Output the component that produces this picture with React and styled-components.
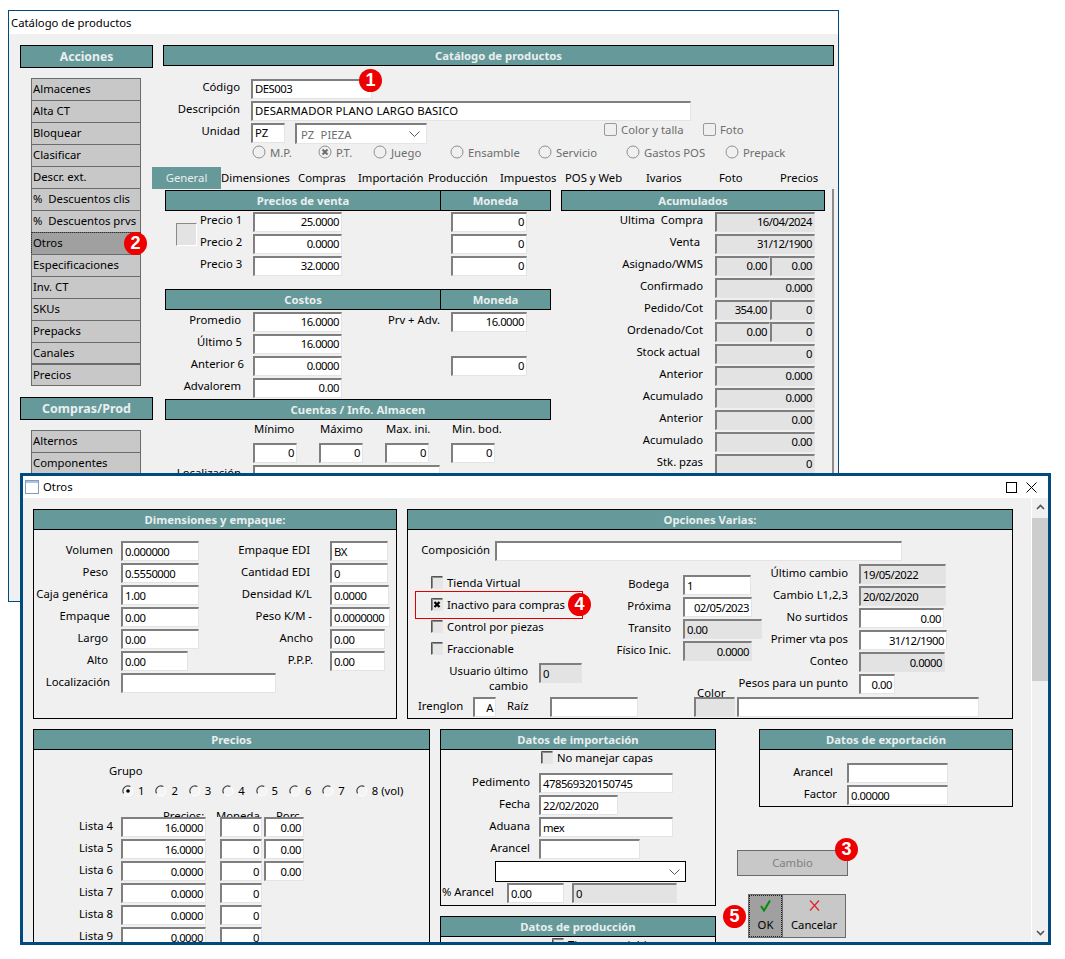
import React from 'react';
import styled, { createGlobalStyle } from 'styled-components';

const GlobalStyle = createGlobalStyle`
  html, body {
    margin: 0;
    padding: 0;
    background: #fff;
  }
  body {
    font-family: "Noto Sans", "Liberation Sans", sans-serif;
    font-size: 11.3px;
    line-height: 16px;
    color: #000;
  }
`;

const TEAL = '#669999';
const FACE = '#f0f0f0';
const NAVY = '#004a80';

const Desktop = styled.div`
  position: relative;
  width: 1065px;
  height: 959px;
  overflow: hidden;
`;

/* windows sit on a free canvas, so these two keep their coordinates */
const Win = styled.section`
  --field-lh: ${(p) => (p.$compact ? 15 : 17)}px;
  --label-lh: ${(p) => (p.$compact ? 15 : 17)}px;
  position: absolute;
  box-sizing: border-box;
  left: ${(p) => p.$left}px;
  top: ${(p) => p.$top}px;
  width: ${(p) => p.$w}px;
  height: ${(p) => p.$h}px;
  border: ${(p) => p.$frame}px solid ${NAVY};
  background: ${FACE};
  display: flex;
  flex-direction: column;
  overflow: hidden;
`;

const TitleBar = styled.header`
  flex: none;
  height: ${(p) => p.$h}px;
  background: #fff;
  display: flex;
  align-items: center;
  padding: 0 11px 0 2px;
  gap: 4px;
`;

const TitleSpacer = styled.div`
  flex: 1;
`;

const TitleIcon = styled.svg`
  display: block;
  flex: none;
  margin-left: ${(p) => p.$ml || 0}px;
`;

const BackBody = styled.div`
  flex: 1;
  display: flex;
  padding: 11px 0 0 11px;
  min-height: 0;
`;

const Sidebar = styled.aside`
  flex: none;
  width: 133px;
  margin-right: 10px;
`;

const Band = styled.div`
  box-sizing: border-box;
  flex: ${(p) => (p.$w ? 'none' : 1)};
  width: ${(p) => (p.$w ? `${p.$w}px` : 'auto')};
  height: ${(p) => p.$h || 21}px;
  margin-left: ${(p) => p.$ml || 0}px;
  background: ${TEAL};
  border: 1px solid #000;
  color: #e9efef;
  font-weight: 700;
  font-size: ${(p) => p.$fs || 11.3}px;
  display: flex;
  align-items: center;
  justify-content: center;
  white-space: nowrap;
`;

const BandRow = styled.div`
  display: flex;
`;

const Menu = styled.nav`
  width: 110px;
  margin: ${(p) => p.$mt}px 0 ${(p) => p.$mb || 0}px 11px;
`;

const MenuItem = styled.div`
  position: relative;
  box-sizing: border-box;
  height: ${(p) => p.$h || 23}px;
  margin-top: ${(p) => (p.$first ? 0 : -1)}px;
  margin-bottom: ${(p) => (p.$gap ? 1 : 0)}px;
  padding-left: 1px;
  background: ${(p) => (p.$active ? '#a0a0a0' : '#c8c8c8')};
  border: 1px solid #6b6b6b;
  line-height: 20px;
  white-space: pre;
  outline: ${(p) => (p.$active ? '1px dotted #333' : 'none')};
  outline-offset: -1px;
`;

const Main = styled.main`
  flex: none;
  width: 671px;
`;

const Row = styled.div`
  position: relative;
  display: flex;
  align-items: flex-start;
  height: ${(p) => p.$h || 22}px;
  margin-left: ${(p) => p.$ml || 0}px;
  margin-top: ${(p) => p.$mt || 0}px;
`;

const Label = styled.span`
  flex: none;
  box-sizing: border-box;
  display: flex;
  justify-content: ${(p) => (p.$left ? 'flex-start' : 'flex-end')};
  width: ${(p) => p.$w}px;
  padding-right: ${(p) => (p.$pr === undefined ? 11 : p.$pr)}px;
  padding-left: ${(p) => p.$pl || 0}px;
  white-space: pre;
  line-height: var(--label-lh);
`;

const WrapLabel = styled(Label)`
  display: block;
  text-align: right;
  line-height: 15px;
`;

const Field = styled.div`
  flex: none;
  box-sizing: border-box;
  width: ${(p) => p.$w}px;
  height: ${(p) => p.$h || 20}px;
  margin-left: ${(p) => p.$ml || 0}px;
  padding: 0 ${(p) => (p.$right ? 2 : 3)}px 0 ${(p) => (p.$right ? 0 : 2)}px;
  border-style: solid;
  border-width: 2px 1px 1px 2px;
  border-color: #7f7f7f #e4e4e4 #e4e4e4 #7f7f7f;
  background: ${(p) => (p.$off ? '#e3e3e3' : '#fff')};
  text-align: ${(p) => (p.$right ? 'right' : 'left')};
  line-height: var(--field-lh);
  letter-spacing: ${(p) => (p.$plain ? 0.1 : -0.5)}px;
  white-space: pre;
`;

const SelectBox = styled(Field)`
  display: flex;
  align-items: center;
  justify-content: space-between;
  color: #6d6d6d;
  padding-left: 4px;
  padding-right: 6px;
`;

const DropBox = styled.div`
  box-sizing: border-box;
  width: 191px;
  height: 21px;
  margin-left: 54px;
  border: 1px solid #000;
  background: #fff;
  display: flex;
  align-items: center;
  justify-content: flex-end;
  padding-right: 5px;
`;

const Chevron = styled.svg`
  display: block;
`;

const ModernCheck = styled.span`
  flex: none;
  box-sizing: border-box;
  width: 13px;
  height: 13px;
  border: 1px solid #9a9a9a;
  border-radius: 2px;
  margin: 0 4px 0 ${(p) => p.$ml || 0}px;
`;

const MutedText = styled.span`
  flex: none;
  width: ${(p) => p.$w}px;
  color: #6d6d6d;
  white-space: nowrap;
  line-height: 14px;
`;

const RadioRow = styled.div`
  display: flex;
  height: 22px;
  margin-left: 89px;
`;

const RadioOption = styled.div`
  flex: none;
  width: ${(p) => p.$w}px;
  display: flex;
  gap: 4px;
  color: #6d6d6d;
`;

const RadioIcon = styled.svg`
  display: block;
  flex: none;
  margin-top: ${(p) => p.$mt || 0}px;
`;

const TabBar = styled.div`
  display: flex;
  height: 22px;
  margin-left: -11px;
`;

const Tab = styled.div`
  flex: none;
  width: ${(p) => p.$w}px;
  line-height: 22px;
  white-space: nowrap;
  text-align: ${(p) => (p.$active ? 'center' : 'left')};
  background: ${(p) => (p.$active ? TEAL : 'transparent')};
  color: ${(p) => (p.$active ? '#e9efef' : '#000')};
`;

const TabPage = styled.div`
  box-sizing: border-box;
  display: flex;
  gap: 10px;
  width: 671px;
  height: 290px;
  padding: 1px 0 0 2px;
  border-right: 2px solid #8c8c8c;
`;

const PageCol = styled.div`
  flex: none;
  width: ${(p) => p.$w}px;
`;

const PriceBlock = styled.div`
  display: flex;
  height: 78px;
  padding-top: 1px;
  box-sizing: border-box;
`;

const Swatch = styled.div`
  flex: none;
  box-sizing: border-box;
  width: 21px;
  height: 23px;
  margin: 11px 3px 0 11px;
  background: #e3e3e3;
  border-style: solid;
  border-width: 1px;
  border-color: #8a8a8a #fff #fff #8a8a8a;
`;

const MinRow = styled.div`
  display: flex;
  height: 23px;
  padding: 1px 0 0 89px;
  box-sizing: border-box;
`;

const MinLabel = styled.span`
  flex: none;
  width: 66px;
`;

const Badge = styled.span`
  position: absolute;
  z-index: 5;
  left: ${(p) => p.$x}px;
  top: ${(p) => p.$y}px;
  width: 23px;
  height: 23px;
  border-radius: 50%;
  background: #ee0000;
  color: #fff;
  font-family: "Liberation Sans", sans-serif;
  font-weight: 700;
  font-size: 18px;
  line-height: 23px;
  text-align: center;
  letter-spacing: 0;
`;

const RedFrame = styled.span`
  position: absolute;
  left: -16px;
  top: -6px;
  width: 166px;
  height: 26px;
  border: 1px solid #e00000;
  pointer-events: none;
`;

const OtrosBody = styled.div`
  flex: 1;
  display: flex;
  min-height: 0;
`;

const OtrosContent = styled.div`
  flex: 1;
  padding: 11px 0 0 10px;
  min-width: 0;
`;

const Scrollbar = styled.div`
  flex: none;
  width: 16px;
  display: flex;
  flex-direction: column;
  align-items: center;
  background: ${FACE};
  border-left: 1px solid #fff;
`;

const ScrollBtn = styled.svg`
  flex: none;
  display: block;
  margin: ${(p) => p.$m};
`;

const ScrollThumb = styled.div`
  flex: none;
  width: 100%;
  height: 163px;
  background: #cdcdcd;
`;

const ScrollTrack = styled.div`
  flex: 1;
`;

const PanelRow = styled.div`
  display: flex;
  align-items: flex-start;
  gap: ${(p) => p.$gap || 0}px;
  margin-bottom: ${(p) => p.$mb || 0}px;
`;

const Panel = styled.div`
  flex: none;
  box-sizing: border-box;
  width: ${(p) => p.$w}px;
  height: ${(p) => p.$h}px;
  border: 1px solid #000;
  margin-bottom: ${(p) => p.$mb || 0}px;
  margin-left: ${(p) => p.$ml || 0}px;
`;

const PanelHead = styled.div`
  box-sizing: border-box;
  height: 20px;
  background: ${TEAL};
  border-bottom: 1px solid #000;
  color: #e9efef;
  font-weight: 700;
  text-align: center;
  line-height: 19px;
`;

const PanelBody = styled.div`
  padding-top: ${(p) => p.$pt || 0}px;
`;

const Columns = styled.div`
  display: flex;
  height: ${(p) => p.$h}px;
`;

const Col = styled.div`
  flex: none;
  width: ${(p) => p.$w}px;
  padding-top: ${(p) => p.$pt || 0}px;
  margin-left: ${(p) => p.$ml || 0}px;
`;

const CheckRow = styled.div`
  position: relative;
  display: flex;
  gap: 4px;
  height: ${(p) => p.$h || 22}px;
  margin-left: ${(p) => p.$ml || 0}px;
  white-space: nowrap;
`;

const CheckIcon = styled.svg`
  display: block;
  flex: none;
  margin-top: 1px;
`;

const ColorStack = styled.div`
  flex: none;
  width: 41px;
  margin: -12px 2px 0 56px;
`;

const ColorLabel = styled.div`
  height: 12px;
  overflow: hidden;
  padding-left: 3px;
  line-height: 15px;
`;

const GrupoLabel = styled.div`
  padding: 13px 0 0 75px;
  height: 20px;
`;

const GrupoRadios = styled.div`
  display: grid;
  grid-template-columns: repeat(8, 33.4px);
  height: 25px;
  margin-left: 88px;
  white-space: nowrap;
`;

const GrupoOption = styled.div`
  display: flex;
  gap: 4px;
  align-items: flex-start;
`;

const ColHeads = styled.div`
  display: flex;
  height: 9px;
  overflow: hidden;
  line-height: 15px;
`;

const ColHead = styled.span`
  flex: none;
  width: ${(p) => p.$w}px;
  white-space: nowrap;
`;

const SideStack = styled.div`
  flex: none;
  width: 300px;
  margin-left: 21px;
`;

const GreyButton = styled.div`
  box-sizing: border-box;
  position: relative;
  width: 111px;
  height: 26px;
  margin-top: 43px;
  background: #c8c8c8;
  border: 1px solid #6b6b6b;
  color: #7f7f7f;
  text-align: center;
  line-height: 23px;
`;

const Actions = styled.div`
  display: flex;
  margin: 18px 0 0 11px;
`;

const ActionBtn = styled.div`
  box-sizing: border-box;
  position: relative;
  flex: none;
  width: ${(p) => p.$w}px;
  height: 44px;
  margin-left: ${(p) => p.$ml || 0}px;
  background: ${(p) => (p.$active ? '#a0a0a0' : '#c8c8c8')};
  border: 1px solid #6b6b6b;
  outline: ${(p) => (p.$active ? '1px dotted #222' : 'none')};
  outline-offset: -2px;
  display: flex;
  flex-direction: column;
  align-items: center;
  padding-top: 4px;
  gap: 5px;
`;

const ActionIcon = styled.svg`
  display: block;
  flex: none;
`;

function Radio({ checked }) {
  return (
    <RadioIcon width="14" height="14" viewBox="0 0 14 14">
      <circle cx="7" cy="7" r="6" fill="none" stroke="#8f8f8f" />
      {checked && <path d="M4.5 4.5l5 5M9.5 4.5l-5 5" stroke="#6d6d6d" strokeWidth="2" />}
    </RadioIcon>
  );
}

function ClassicRadio({ checked }) {
  return (
    <RadioIcon $mt={2} width="12" height="12" viewBox="0 0 12 12">
      <circle cx="6" cy="6" r="5" fill="#f4f4f4" stroke="#fff" />
      <path d="M1.6 8.4A5 5 0 0 1 8.4 1.6" fill="none" stroke="#444" strokeWidth="1.2" />
      {checked && <circle cx="6" cy="6" r="1.8" fill="#000" />}
    </RadioIcon>
  );
}

function ClassicCheck({ checked }) {
  return (
    <CheckIcon width="12" height="13" viewBox="0 0 12 13">
      <rect x="0" y="0" width="12" height="13" fill="#e6e6e6" />
      <path d="M.5 12.5V.5h11" fill="none" stroke="#555" />
      <path d="M1.5 12V1.5h10" fill="none" stroke="#8a8a8a" />
      {checked && <path d="M3.5 4l5 5M8.5 4l-5 5" stroke="#000" strokeWidth="2.3" />}
    </CheckIcon>
  );
}

function ChevronDown() {
  return (
    <Chevron width="11" height="6" viewBox="0 0 11 6">
      <path d="M.5 .5l5 5 5-5" fill="none" stroke="#555" />
    </Chevron>
  );
}

const menuOne = [
  'Almacenes', 'Alta CT', 'Bloquear', 'Clasificar', 'Descr. ext.', '%  Descuentos clis',
  '%  Descuentos prvs', 'Otros', 'Especificaciones', 'Inv. CT', 'SKUs', 'Prepacks', 'Canales', 'Precios',
];

const topRadios = [
  ['M.P.', 66], ['P.T.', 55, true], ['Juego', 77], ['Ensamble', 88],
  ['Servicio', 88], ['Gastos POS', 99], ['Prepack', 70],
];

const tabs = [
  ['General', 69, true], ['Dimensiones', 77], ['Compras', 60], ['Importación', 70], ['Producción', 72],
  ['Impuestos', 65], ['POS y Web', 81], ['Ivarios', 73], ['Foto', 61], ['Precios', 50],
];

const acumulados = [
  ['Ultima  Compra', ['16/04/2024'], 12],
  ['Venta', ['31/12/1900'], 15],
  ['Asignado/WMS', ['0.00', '0.00'], 12],
  ['Confirmado', ['0.000'], 12],
  ['Pedido/Cot', ['354.00', '0'], 12],
  ['Ordenado/Cot', ['0.00', '0'], 12],
  ['Stock actual', ['0'], 15],
  ['Anterior', ['0.000'], 12],
  ['Acumulado', ['0.000'], 12],
  ['Anterior', ['0.00'], 12],
  ['Acumulado', ['0.00'], 12],
  ['Stk. pzas', ['0'], 12],
];

const dimsLeft = [
  ['Volumen', '0.000000', 78, 8],
  ['Peso', '0.5550000', 78, 13],
  ['Caja genérica', '1.00', 78, 13],
  ['Empaque', '0.00', 78, 11],
  ['Largo', '0.00', 78, 13],
  ['Alto', '0.00', 67, 13],
  ['Localización', '', 155, 11],
];

const dimsRight = [
  ['Empaque EDI', 'BX', 58, 20],
  ['Cantidad EDI', '0', 58, 20],
  ['Densidad K/L', '0.0000', 59, 18],
  ['Peso K/M -', '0.0000000', 60, 18],
  ['Ancho', '0.00', 55, 17],
  ['P.P.P.', '0.00', 55, 17],
];

const optChecks = [
  ['Tienda Virtual'],
  ['Inactivo para compras', true],
  ['Control por piezas'],
  ['Fraccionable'],
];

const optMiddle = [
  ['Bodega', '1', 68, false, false, 14],
  ['Próxima', '02/05/2023', 69, false, true, 12],
  ['Transito', '0.00', 79, true, false, 12],
  ['Físico Inic.', '0.0000', 69, true, true, 12],
];

const optRight = [
  ['Último cambio', '19/05/2022', 87, true, false],
  ['Cambio L1,2,3', '20/02/2020', 87, true, false],
  ['No surtidos', '0.00', 85, false, true],
  ['Primer vta pos', '31/12/1900', 88, false, true],
  ['Conteo', '0.0000', 86, true, true],
  ['Pesos para un punto', '0.00', 36, false, true],
];

const listas = [
  ['Lista 4', '16.0000', '0', '0.00'],
  ['Lista 5', '16.0000', '0', '0.00'],
  ['Lista 6', '0.0000', '0', '0.00'],
  ['Lista 7', '0.0000', '0'],
  ['Lista 8', '0.0000', '0'],
  ['Lista 9', '0.0000', '0'],
];

const importacion = [
  ['Pedimento', '478569320150745', 134],
  ['Fecha', '22/02/2020', 79],
  ['Aduana', 'mex', 134],
  ['Arancel', '', 101],
];

function menuHeight(name) {
  if (name === 'Canales' || name === 'Precios') return 22;
  return 23;
}

function CatalogWindow() {
  return (
    <Win $left={8} $top={10} $w={831} $h={592} $frame={1} $compact>
      <TitleBar $h={23}>Catálogo de productos</TitleBar>
      <BackBody>
        <Sidebar>
          <Band $h={23} $fs={12.2}>Acciones</Band>
          <Menu $mt={10} $mb={11}>
            {menuOne.map((name, i) => (
              <MenuItem
                key={name}
                $first={i === 0}
                $h={menuHeight(name)}
                $active={name === 'Otros'}
                $gap={name === 'Canales'}
              >
                {name}
                {name === 'Otros' && <Badge $x={92} $y={-1}>2</Badge>}
              </MenuItem>
            ))}
          </Menu>
          <Band $h={23} $fs={12.5}>Compras/Prod</Band>
          <Menu $mt={10}>
            <MenuItem $first>Alternos</MenuItem>
            <MenuItem>Componentes</MenuItem>
          </Menu>
        </Sidebar>

        <Main>
          <Band>Catálogo de productos</Band>
          <Row $mt={13}>
            <Label $w={88}>Código</Label>
            <Field $w={121}>DES003</Field>
            <Badge $x={196} $y={-10}>1</Badge>
          </Row>
          <Row>
            <Label $w={88}>Descripción</Label>
            <Field $w={440} $plain>DESARMADOR PLANO LARGO BASICO</Field>
          </Row>
          <Row>
            <Label $w={88}>Unidad</Label>
            <Field $w={34} $plain>PZ</Field>
            <SelectBox $w={132} $h={21} $ml={10} $plain>
              {'PZ  PIEZA'}
              <ChevronDown />
            </SelectBox>
            <ModernCheck $ml={177} />
            <MutedText $w={82}>Color y talla</MutedText>
            <ModernCheck />
            <MutedText $w={30}>Foto</MutedText>
          </Row>
          <RadioRow>
            {topRadios.map(([name, w, on]) => (
              <RadioOption key={name} $w={w}>
                <Radio checked={on} />
                {name}
              </RadioOption>
            ))}
          </RadioRow>
          <TabBar>
            {tabs.map(([name, w, on]) => (
              <Tab key={name} $w={w} $active={on}>{name}</Tab>
            ))}
          </TabBar>
          <TabPage>
            <PageCol $w={386}>
              <BandRow>
                <Band $w={276}>Precios de venta</Band>
                <Band $ml={-1}>Moneda</Band>
              </BandRow>
              <PriceBlock>
                <Swatch />
                <div>
                  {[['Precio 1', '25.0000'], ['Precio 2', '0.0000'], ['Precio 3', '32.0000']].map(([name, val]) => (
                    <Row key={name}>
                      <Label $w={53} $pr={0} $left>{name}</Label>
                      <Field $w={89} $right>{val}</Field>
                      <Field $w={76} $ml={109} $right>0</Field>
                    </Row>
                  ))}
                </div>
              </PriceBlock>
              <BandRow>
                <Band $w={276}>Costos</Band>
                <Band $ml={-1}>Moneda</Band>
              </BandRow>
              <Row $mt={2}>
                <Label $w={88} $pr={12}>Promedio</Label>
                <Field $w={89} $right>16.0000</Field>
                <Label $w={109} $pr={11}>Prv + Adv.</Label>
                <Field $w={76} $right>16.0000</Field>
              </Row>
              <Row>
                <Label $w={88} $pr={11}>Último 5</Label>
                <Field $w={89} $right>16.0000</Field>
              </Row>
              <Row>
                <Label $w={88} $pr={9}>Anterior 6</Label>
                <Field $w={89} $right>0.0000</Field>
                <Field $w={76} $ml={109} $right>0</Field>
              </Row>
              <Row $h={21}>
                <Label $w={88} $pr={12}>Advalorem</Label>
                <Field $w={89} $right>0.00</Field>
              </Row>
              <Band>Cuentas / Info. Almacen</Band>
              <MinRow>
                <MinLabel>Mínimo</MinLabel>
                <MinLabel>Máximo</MinLabel>
                <MinLabel>Max. ini.</MinLabel>
                <MinLabel>Min. bod.</MinLabel>
              </MinRow>
              <Row>
                <Label $w={88} $pr={0} />
                <Field $w={44} $right>0</Field>
                <Field $w={44} $ml={22} $right>0</Field>
                <Field $w={44} $ml={22} $right>0</Field>
                <Field $w={44} $ml={22} $right>0</Field>
              </Row>
              <Row>
                <Label $w={88} $pr={12}>Localización</Label>
                <Field $w={187} />
              </Row>
            </PageCol>
            <PageCol $w={264}>
              <Band>Acumulados</Band>
              {acumulados.map(([name, vals, pr], i) => (
                <Row key={`${name}${i}`} $mt={i === 0 ? 1 : 0}>
                  <Label $w={154} $pr={pr}>{name}</Label>
                  {vals.length === 1 ? (
                    <Field $w={100} $right $off>{vals[0]}</Field>
                  ) : (
                    <>
                      <Field $w={55} $right $off>{vals[0]}</Field>
                      <Field $w={45} $right $off>{vals[1]}</Field>
                    </>
                  )}
                </Row>
              ))}
            </PageCol>
          </TabPage>
        </Main>
      </BackBody>
    </Win>
  );
}

function OtrosWindow() {
  return (
    <Win $left={20} $top={473} $w={1031} $h={472} $frame={3}>
      <TitleBar $h={22}>
        <TitleIcon width="14" height="14" viewBox="0 0 14 14">
          <rect x=".5" y=".5" width="13" height="13" fill="#fff" stroke="#7f9db9" />
          <rect x="1" y="1" width="12" height="2" fill="#a9c3e6" />
        </TitleIcon>
        Otros
        <TitleSpacer />
        <TitleIcon width="11" height="11" viewBox="0 0 11 11">
          <rect x=".5" y=".5" width="10" height="10" fill="none" stroke="#000" />
        </TitleIcon>
        <TitleIcon $ml={5} width="11" height="11" viewBox="0 0 11 11">
          <path d="M.5 .5l10 10M10.5 .5l-10 10" stroke="#000" />
        </TitleIcon>
      </TitleBar>
      <OtrosBody>
        <OtrosContent>
          <PanelRow $gap={10} $mb={10}>
            <Panel $w={364} $h={210}>
              <PanelHead>Dimensiones y empaque:</PanelHead>
              <PanelBody $pt={11}>
                <Columns $h={170}>
                  <Col $w={196}>
                    {dimsLeft.map(([name, val, w, pr]) => (
                      <Row key={name}>
                        <Label $w={87} $pr={pr}>{name}</Label>
                        <Field $w={w}>{val}</Field>
                      </Row>
                    ))}
                  </Col>
                  <Col $w={160}>
                    {dimsRight.map(([name, val, w, pr]) => (
                      <Row key={name}>
                        <Label $w={100} $pr={pr}>{name}</Label>
                        <Field $w={w}>{val}</Field>
                      </Row>
                    ))}
                  </Col>
                </Columns>
              </PanelBody>
            </Panel>
            <Panel $w={606} $h={210}>
              <PanelHead>Opciones Varias:</PanelHead>
              <PanelBody $pt={11}>
                <Row>
                  <Label $w={87} $pr={5}>Composición</Label>
                  <Field $w={407} />
                </Row>
                <Columns $h={134}>
                  <Col $w={192} $pt={12}>
                    {optChecks.map(([name, on]) => (
                      <CheckRow key={name} $ml={23}>
                        <ClassicCheck checked={on} />
                        {name}
                        {on && (
                          <RedFrame>
                            <Badge $x={152} $y={1}>4</Badge>
                          </RedFrame>
                        )}
                      </CheckRow>
                    ))}
                    <Row>
                      <WrapLabel $w={131}>Usuario último<br />cambio</WrapLabel>
                      <Field $w={43} $off>0</Field>
                    </Row>
                  </Col>
                  <Col $w={170} $pt={12}>
                    {optMiddle.map(([name, val, w, off, right, pr]) => (
                      <Row key={name}>
                        <Label $w={83} $pr={pr}>{name}</Label>
                        <Field $w={w} $off={off} $right={right}>{val}</Field>
                      </Row>
                    ))}
                  </Col>
                  <Col $w={240} $pt={1}>
                    {optRight.map(([name, val, w, off, right]) => (
                      <Row key={name}>
                        <Label $w={89}>{name}</Label>
                        <Field $w={w} $off={off} $right={right}>{val}</Field>
                      </Row>
                    ))}
                  </Col>
                </Columns>
                <Row $ml={10}>
                  <Label $w={55} $pr={0} $left>Irenglon</Label>
                  <Field $w={23} $right>A</Field>
                  <Label $w={54} $pr={0} $pl={11} $left>Raíz</Label>
                  <Field $w={88} />
                  <ColorStack>
                    <ColorLabel>Color</ColorLabel>
                    <Field $w={41} $off />
                  </ColorStack>
                  <Field $w={242} />
                </Row>
              </PanelBody>
            </Panel>
          </PanelRow>
          <PanelRow>
            <Panel $w={397} $h={240}>
              <PanelHead>Precios</PanelHead>
              <PanelBody>
                <GrupoLabel>Grupo</GrupoLabel>
                <GrupoRadios>
                  {['1', '2', '3', '4', '5', '6', '7', '8 (vol)'].map((n, i) => (
                    <GrupoOption key={n}>
                      <ClassicRadio checked={i === 0} />
                      {n}
                    </GrupoOption>
                  ))}
                </GrupoRadios>
                <ColHeads>
                  <ColHead $w={129} />
                  <ColHead $w={53}>Precios:</ColHead>
                  <ColHead $w={60}>Moneda</ColHead>
                  <ColHead $w={40}>Porc.</ColHead>
                </ColHeads>
                {listas.map(([name, price, coin, pct]) => (
                  <Row key={name}>
                    <Label $w={87} $pr={8}>{name}</Label>
                    <Field $w={85} $right>{price}</Field>
                    <Field $w={42} $ml={14} $right>{coin}</Field>
                    {pct && <Field $w={40} $ml={2} $right>{pct}</Field>}
                  </Row>
                ))}
              </PanelBody>
            </Panel>
            <Col $w={276} $ml={10}>
              <Panel $w={276} $h={177} $mb={10}>
                <PanelHead>Datos de importación</PanelHead>
                <PanelBody>
                  <CheckRow $ml={100} $h={23}>
                    <ClassicCheck />
                    No manejar capas
                  </CheckRow>
                  {importacion.map(([name, val, w]) => (
                    <Row key={name}>
                      <Label $w={98} $pr={9}>{name}</Label>
                      <Field $w={w}>{val}</Field>
                    </Row>
                  ))}
                  <Row>
                    <DropBox><ChevronDown /></DropBox>
                  </Row>
                  <Row $ml={1}>
                    <Label $w={65} $pr={0} $left>% Arancel</Label>
                    <Field $w={57}>0.00</Field>
                    <Field $w={105} $ml={8} $off>0</Field>
                  </Row>
                </PanelBody>
              </Panel>
              <Panel $w={276} $h={60}>
                <PanelHead>Datos de producción</PanelHead>
                <PanelBody>
                  <CheckRow $ml={111}>
                    <ClassicCheck />
                    Tiempo variable
                  </CheckRow>
                </PanelBody>
              </Panel>
            </Col>
            <SideStack>
              <Panel $w={254} $h={78} $ml={22}>
                <PanelHead>Datos de exportación</PanelHead>
                <PanelBody $pt={13}>
                  <Row>
                    <Label $w={87} $pr={14}>Arancel</Label>
                    <Field $w={101} />
                  </Row>
                  <Row>
                    <Label $w={87} $pr={10}>Factor</Label>
                    <Field $w={101}>0.00000</Field>
                  </Row>
                </PanelBody>
              </Panel>
              <GreyButton>
                Cambio
                <Badge $x={97} $y={-13}>3</Badge>
              </GreyButton>
              <Actions>
                <ActionBtn $w={35} $active>
                  <Badge $x={-26} $y={10}>5</Badge>
                  <ActionIcon width="13" height="13" viewBox="0 0 13 13">
                    <path d="M2 7l3 4.5L11 1.5" fill="none" stroke="#0a8a0a" strokeWidth="2" />
                  </ActionIcon>
                  OK
                </ActionBtn>
                <ActionBtn $w={64} $ml={-1}>
                  <ActionIcon width="13" height="13" viewBox="0 0 13 13">
                    <path d="M2 1.5l9 10M11 1.5l-9 10" stroke="#e0242b" strokeWidth="1.2" />
                  </ActionIcon>
                  Cancelar
                </ActionBtn>
              </Actions>
            </SideStack>
          </PanelRow>
        </OtrosContent>
        <Scrollbar>
          <ScrollBtn $m="6px 0 8px" width="9" height="6" viewBox="0 0 9 6">
            <path d="M1 5l3.5-3.5L8 5" fill="none" stroke="#555" strokeWidth="1.6" />
          </ScrollBtn>
          <ScrollThumb />
          <ScrollTrack />
          <ScrollBtn $m="0 0 6px" width="9" height="6" viewBox="0 0 9 6">
            <path d="M1 1l3.5 3.5L8 1" fill="none" stroke="#555" strokeWidth="1.6" />
          </ScrollBtn>
        </Scrollbar>
      </OtrosBody>
    </Win>
  );
}

export default function App() {
  return (
    <Desktop>
      <GlobalStyle />
      <CatalogWindow />
      <OtrosWindow />
    </Desktop>
  );
}
